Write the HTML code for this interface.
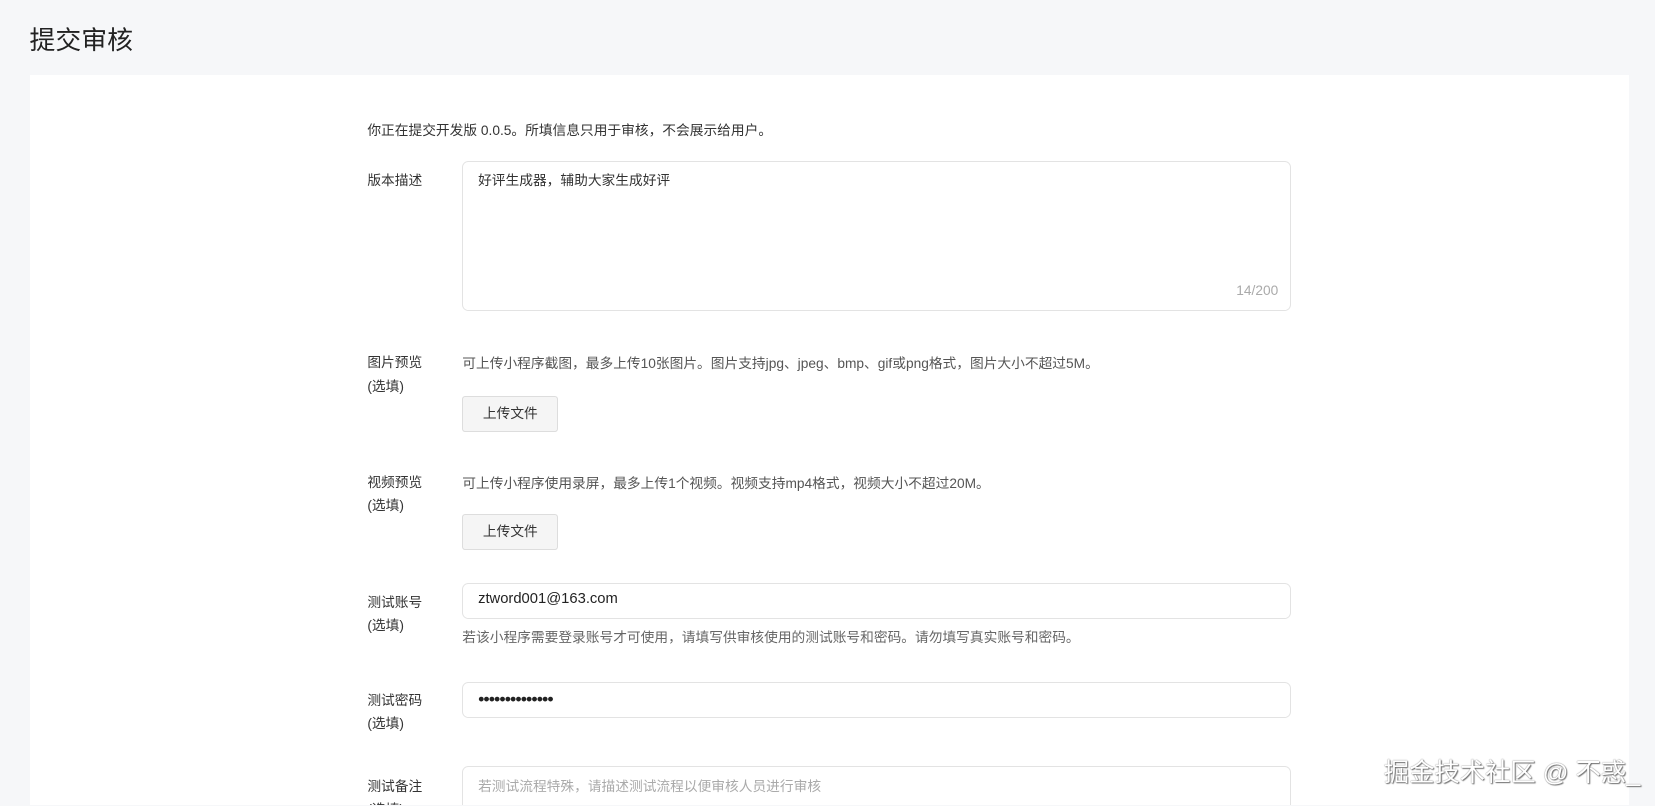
<!DOCTYPE html>
<html><head><meta charset="utf-8"><style>
*{margin:0;padding:0;box-sizing:border-box}
html,body{width:1655px;height:806px;overflow:hidden;background:#f6f7f9}
#w{position:absolute;left:0;top:0;width:1568px;height:763px;overflow:hidden;zoom:1.0555;font-family:"Liberation Sans","Noto Sans CJK SC",sans-serif;color:#333}
.a{position:absolute}
h1{position:absolute;left:28px;top:19px;font-size:24.5px;font-weight:normal;color:#222}
.card{position:absolute;left:28px;top:71px;width:1515px;height:692px;background:#fff}
.lbl{position:absolute;left:348px;font-size:13px;line-height:22px;color:#333}
.t{font-size:13px;line-height:20px;color:#333}
.box{position:absolute;left:438px;width:785px;border:1px solid #e3e3e3;border-radius:6px;background:#fff}
.btn{position:absolute;left:438px;width:91px;height:34px;border:1px solid #ddd;border-radius:3px;background:#f5f5f5;font-size:13px;line-height:32px;text-align:center;color:#333}
</style></head><body><div id="w">
<h1>提交审核</h1>
<div class="card"></div>
<div class="a t" style="left:348px;top:114px">你正在提交开发版 0.0.5。所填信息只用于审核，不会展示给用户。</div>
<div class="lbl" style="top:160px">版本描述</div>
<div class="box" style="top:153px;height:142px"><div class="t" style="position:absolute;left:14px;top:7px">好评生成器，辅助大家生成好评</div><div class="t" style="position:absolute;right:11px;bottom:9px;color:#aaa">14/200</div></div>
<div class="lbl" style="top:333px">图片预览<br>(选填)</div>
<div class="a t" style="left:438px;top:334px;color:#555">可上传小程序截图，最多上传10张图片。图片支持jpg、jpeg、bmp、gif或png格式，图片大小不超过5M。</div>
<div class="btn" style="top:375px">上传文件</div>
<div class="lbl" style="top:446px">视频预览<br>(选填)</div>
<div class="a t" style="left:438px;top:448px;color:#555">可上传小程序使用录屏，最多上传1个视频。视频支持mp4格式，视频大小不超过20M。</div>
<div class="btn" style="top:487px">上传文件</div>
<div class="lbl" style="top:560px">测试账号<br>(选填)</div>
<div class="box" style="top:552px;height:34px"><div style="position:absolute;left:14px;top:7px;font-size:14px;color:#222">ztword001@163.com</div></div>
<div class="a t" style="left:438px;top:594px;color:#666">若该小程序需要登录账号才可使用，请填写供审核使用的测试账号和密码。请勿填写真实账号和密码。</div>
<div class="lbl" style="top:653px">测试密码<br>(选填)</div>
<div class="box" style="top:646px;height:34px"><div style="position:absolute;left:14px;top:6px;font-size:17px;color:#222;letter-spacing:-0.9px">••••••••••••••</div></div>
<div class="lbl" style="top:734px">测试备注<br>(选填)</div>
<div class="box" style="top:726px;height:60px"><div class="t" style="position:absolute;left:14px;top:8px;color:#aaa">若测试流程特殊，请描述测试流程以便审核人员进行审核</div></div>
<div class="a" style="left:1311px;top:713px;font-size:24px;color:#fff;text-shadow:0 0 1px #555,1px 1px 1px #777">掘金技术社区 @ 不惑_</div>
</div></body></html>
